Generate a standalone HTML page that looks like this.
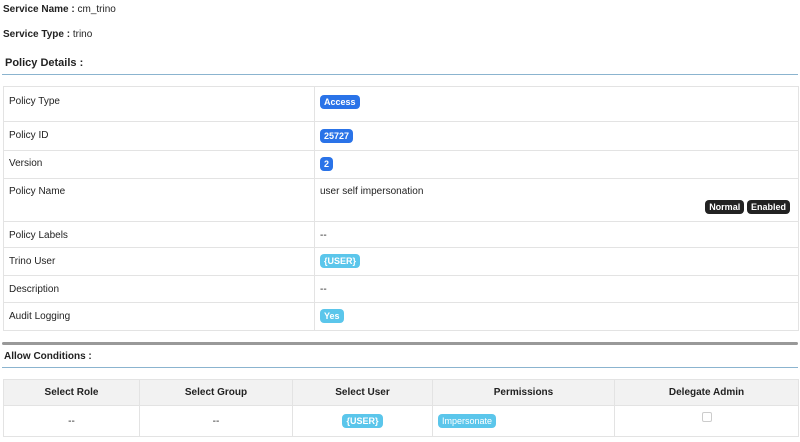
<!DOCTYPE html>
<html><head><style>
body{margin:0;width:800px;height:442px;overflow:hidden;background:#fff;font-family:"Liberation Sans",Arial,sans-serif;font-size:10px;color:#222;position:relative}
.a{position:absolute}
.b{font-weight:bold}
.lbl{display:inline-block;color:#fff;font-weight:bold;font-size:9px;border-radius:4px;padding:2px 4px;line-height:10px}
.blue{background:#2a73e8}.cyan{background:#5bc6eb}.dark{background:#222}
table{border-collapse:collapse;position:absolute}
td{border:1px solid #e3e3e3;padding:0 5px;vertical-align:top}
</style></head><body>
<div class="a" style="left:3px;top:4px"><span class="b">Service Name :</span> cm_trino</div>
<div class="a" style="left:3px;top:29px"><span class="b">Service Type :</span> trino</div>
<div class="a b" style="left:5px;top:57px;font-size:11px">Policy Details :</div>
<div class="a" style="left:2px;top:74px;width:796px;height:1px;background:#8bb4cf"></div>

<table style="left:3px;top:86px;width:796px">
<tr style="height:35px"><td style="width:300px;padding-top:9px">Policy Type</td><td style="padding-top:8px"><span class="lbl blue">Access</span></td></tr>
<tr style="height:29px"><td style="padding-top:8px">Policy ID</td><td style="padding-top:7px"><span class="lbl blue">25727</span></td></tr>
<tr style="height:28px"><td style="padding-top:7px">Version</td><td style="padding-top:6px"><span class="lbl blue">2</span></td></tr>
<tr style="height:43px"><td style="padding-top:7px">Policy Name</td><td style="padding-top:7px;position:relative">user self impersonation<div style="position:absolute;right:8px;top:21px"><span class="lbl dark">Normal</span> <span class="lbl dark">Enabled</span></div></td></tr>
<tr style="height:26px"><td style="padding-top:8px">Policy Labels</td><td style="padding-top:8px">--</td></tr>
<tr style="height:28px"><td style="padding-top:8px">Trino User</td><td style="padding-top:6px"><span class="lbl cyan">{USER}</span></td></tr>
<tr style="height:27px"><td style="padding-top:8px">Description</td><td style="padding-top:8px">--</td></tr>
<tr style="height:28px"><td style="padding-top:8px">Audit Logging</td><td style="padding-top:6px"><span class="lbl cyan">Yes</span></td></tr>
</table>

<div class="a" style="left:2px;top:342px;width:796px;height:3px;background:#999;border-radius:2px"></div>
<div class="a b" style="left:4px;top:351px;font-size:10px">Allow Conditions :</div>
<div class="a" style="left:2px;top:367px;width:796px;height:1px;background:#8bb4cf"></div>

<table style="left:3px;top:379px;width:796px;text-align:center">
<tr style="height:26px;background:#f2f2f2" class="b"><td style="width:125px;vertical-align:middle">Select Role</td><td style="width:142px;vertical-align:middle">Select Group</td><td style="width:129px;vertical-align:middle">Select User</td><td style="width:171px;vertical-align:middle">Permissions</td><td style="vertical-align:middle">Delegate Admin</td></tr>
<tr style="height:31px"><td style="vertical-align:middle">--</td><td style="vertical-align:middle">--</td><td style="vertical-align:middle"><span class="lbl cyan">{USER}</span></td><td style="text-align:left;padding-left:5px;vertical-align:middle"><span class="lbl cyan" style="font-weight:normal">Impersonate</span></td><td style="padding-top:6px"><span style="display:inline-block;width:8px;height:8px;border:1px solid #ccc;border-radius:2px"></span></td></tr>
</table>
</body></html>
